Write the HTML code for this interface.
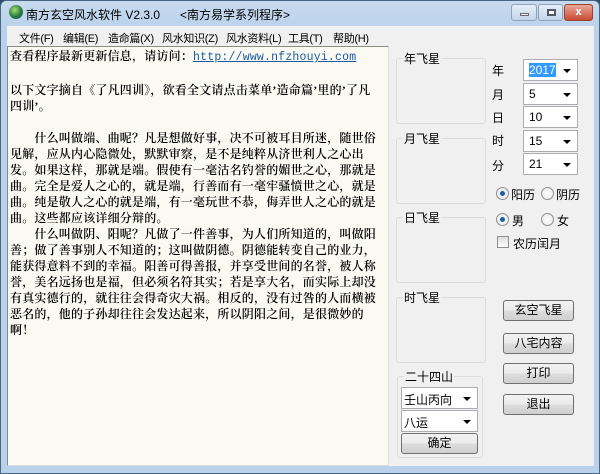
<!DOCTYPE html>
<html><head><meta charset="utf-8"><style>
*{margin:0;padding:0;box-sizing:border-box}
body{width:600px;height:474px;overflow:hidden;background:#2b4a6b;font-family:"Liberation Sans","Noto Sans CJK SC",sans-serif;font-size:12px;position:relative}
.win{position:absolute;left:0;top:0;width:600px;height:474px;background:linear-gradient(#c7dbef,#b9d1ea 30px,#b9d1ea);border:1px solid #4a6684;border-radius:6px 6px 0 0}
.a{position:absolute}
.title{left:25px;top:5px;font-size:12px;color:#000}
.menu{left:6px;top:25px;width:587px;height:20px;background:#f0f0f0}
.menu span{position:absolute;top:4px;font-size:11px;letter-spacing:-0.3px}
.text{left:6px;top:45px;width:382px;height:420px;background:#fafaf3;border:1px solid #8a8a8a;border-right-color:#ddd;border-bottom-color:#ddd}
.text pre{position:absolute;left:2px;top:1px;font-family:"Liberation Serif","Noto Serif CJK SC",serif;font-size:12px;line-height:16px;color:#000;white-space:pre;font-weight:600;letter-spacing:0.2px}
.panel{left:388px;top:45px;width:205px;height:420px;background:#f0f0f0}
.grp{position:absolute;border:1px solid #dcdcdc;border-radius:3px}
.grp b{position:absolute;left:6px;top:-9px;background:#f0f0f0;font-weight:normal;padding:0 1px}
.combo{position:absolute;background:#fff;border:1px solid #abadb3;height:22px;padding:3px 5px;font-size:12px}
.combo:after{content:"";position:absolute;right:6px;top:9px;border:4px solid transparent;border-top:4px solid #000}
.lbl{position:absolute;font-size:12px}
.btn{position:absolute;border:1px solid #707070;border-radius:3px;background:linear-gradient(#f2f2f2,#ebebeb 50%,#dddddd 51%,#cfcfcf);text-align:center;line-height:19px;font-size:12px}
.radio{position:absolute;width:13px;height:13px;border-radius:50%;border:1px solid #8e8f8f;background:radial-gradient(#fff,#e6e6e6)}
.radio.on:after{content:"";position:absolute;left:3px;top:3px;width:5px;height:5px;border-radius:50%;background:#1b5ea8}
.tb{position:absolute;top:3px;height:17px;border:1px solid #8ea4bf;border-radius:3px;background:linear-gradient(#e4eef9,#c5d6ea)}
</style></head><body>
<div class="win">
 <div class="a" style="left:8px;top:4px;width:14px;height:14px;border-radius:50%;background:radial-gradient(circle at 40% 35%,#9fe07a,#2a7a3a 55%,#1a4a8a)"></div>
 <div class="a title">南方玄空风水软件 V2.3.0&nbsp;&nbsp;&nbsp;&nbsp;&nbsp;&nbsp;&lt;南方易学系列程序&gt;</div>
 <div class="tb" style="left:510px;width:26px"><div class="a" style="left:8px;top:8px;width:9px;height:3px;background:#fff;border:1px solid #667"></div></div>
 <div class="tb" style="left:537px;width:25px"><div class="a" style="left:8px;top:4px;width:9px;height:7px;border:2px solid #556;background:#fff"></div></div>
 <div class="tb" style="left:563px;width:29px;background:linear-gradient(#e9a898,#c94a33);border-color:#9a4030;color:#fff;text-align:center;font-weight:bold;line-height:14px;font-size:11px">x</div>
 <div class="a menu">
  <span style="left:12px">文件(F)</span><span style="left:56px">编辑(E)</span><span style="left:101px">造命篇(X)</span><span style="left:155px">风水知识(Z)</span><span style="left:219px">风水资料(L)</span><span style="left:281px">工具(T)</span><span style="left:326px">帮助(H)</span>
 </div>
 <div class="a text"><pre>查看程序最新更新信息，请访问：<span style="color:#1a5aa0;text-decoration:underline;font-family:'Liberation Mono',monospace;font-size:11.5px;font-weight:normal">http://www.nfzhouyi.com</span>

以下文字摘自《了凡四训》，欲看全文请点击菜单’造命篇’里的’了凡
四训’。

　　什么叫做端、曲呢？凡是想做好事，决不可被耳目所迷，随世俗
见解，应从内心隐微处，默默审察，是不是纯粹从济世利人之心出
发。如果这样，那就是端。假使有一毫沽名钓誉的媚世之心，那就是
曲。完全是爱人之心的，就是端，行善而有一毫牢骚愤世之心，就是
曲。纯是敬人之心的就是端，有一毫玩世不恭，侮弄世人之心的就是
曲。这些都应该详细分辩的。
　　什么叫做阴、阳呢？凡做了一件善事，为人们所知道的，叫做阳
善；做了善事别人不知道的；这叫做阴德。阴德能转变自己的业力，
能获得意料不到的幸福。阳善可得善报，并享受世间的名誉，被人称
誉，美名远扬也是福，但必须名符其实；若是享大名，而实际上却没
有真实德行的，就往往会得奇灾大祸。相反的，没有过咎的人而横被
恶名的，他的子孙却往往会发达起来，所以阴阳之间，是很微妙的
啊！</pre></div>
 <div class="a panel"></div>
 <div class="grp" style="left:395px;top:57px;width:90px;height:66px"><b>年飞星</b></div>
 <div class="grp" style="left:395px;top:137px;width:90px;height:66px"><b>月飞星</b></div>
 <div class="grp" style="left:395px;top:216px;width:90px;height:66px"><b>日飞星</b></div>
 <div class="grp" style="left:395px;top:296px;width:90px;height:66px"><b>时飞星</b></div>
 <div class="grp" style="left:396px;top:375px;width:86px;height:82px"><b>二十四山</b></div>
 <div class="lbl" style="left:491px;top:61px">年</div>
 <div class="lbl" style="left:491px;top:85px">月</div>
 <div class="lbl" style="left:491px;top:108px">日</div>
 <div class="lbl" style="left:491px;top:131px">时</div>
 <div class="lbl" style="left:491px;top:156px">分</div>
 <div class="combo" style="left:522px;top:58px;width:55px"><span style="background:#3399ff;color:#fff">2017</span></div>
 <div class="combo" style="left:522px;top:82px;width:55px">5</div>
 <div class="combo" style="left:522px;top:105px;width:55px">10</div>
 <div class="combo" style="left:522px;top:129px;width:55px">15</div>
 <div class="combo" style="left:522px;top:152px;width:55px">21</div>
 <div class="radio on" style="left:495px;top:186px"></div><div class="lbl" style="left:510px;top:185px">阳历</div>
 <div class="radio" style="left:540px;top:186px"></div><div class="lbl" style="left:555px;top:185px">阴历</div>
 <div class="radio on" style="left:495px;top:212px"></div><div class="lbl" style="left:511px;top:211px">男</div>
 <div class="radio" style="left:540px;top:212px"></div><div class="lbl" style="left:556px;top:211px">女</div>
 <div class="a" style="left:496px;top:235px;width:12px;height:12px;border:1px solid #8e8f8f;background:linear-gradient(#ddd,#fff)"></div><div class="lbl" style="left:512px;top:234px">农历闰月</div>
 <div class="btn" style="left:502px;top:299px;width:71px;height:21px">玄空飞星</div>
 <div class="btn" style="left:502px;top:332px;width:71px;height:21px">八宅内容</div>
 <div class="btn" style="left:502px;top:362px;width:71px;height:21px">打印</div>
 <div class="btn" style="left:502px;top:393px;width:71px;height:21px">退出</div>
 <div class="combo" style="left:400px;top:386px;width:77px;padding-left:2px">壬山丙向</div>
 <div class="combo" style="left:400px;top:409px;width:77px;padding-left:2px">八运</div>
 <div class="btn" style="left:400px;top:432px;width:77px;height:21px">确定</div>
</div>
</body></html>
